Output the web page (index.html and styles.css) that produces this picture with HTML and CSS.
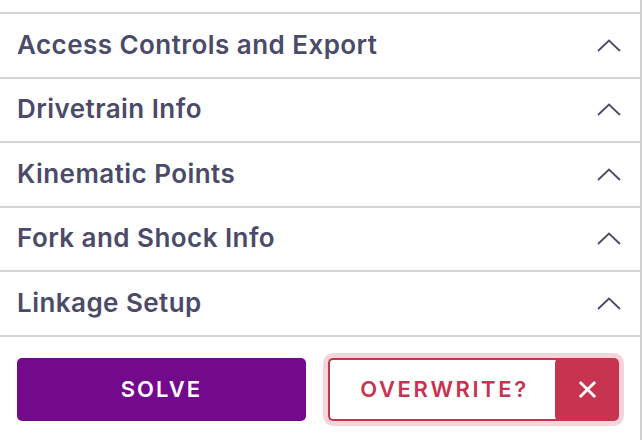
FILE: index.html
```html
<!DOCTYPE html>
<html>
<head>
<meta charset="utf-8">
<link rel="stylesheet" href="styles.css">
</head>
<body>
<div class="panel">
  <div class="row"><span class="title">Access Controls and Export</span><svg class="chev" viewBox="0 0 24 13"><path d="M1 12 L12 1.5 L23 12" /></svg></div>
  <div class="row"><span class="title">Drivetrain Info</span><svg class="chev" viewBox="0 0 24 13"><path d="M1 12 L12 1.5 L23 12" /></svg></div>
  <div class="row"><span class="title">Kinematic Points</span><svg class="chev" viewBox="0 0 24 13"><path d="M1 12 L12 1.5 L23 12" /></svg></div>
  <div class="row"><span class="title">Fork and Shock Info</span><svg class="chev" viewBox="0 0 24 13"><path d="M1 12 L12 1.5 L23 12" /></svg></div>
  <div class="row row-last"><span class="title">Linkage Setup</span><svg class="chev" viewBox="0 0 24 13"><path d="M1 12 L12 1.5 L23 12" /></svg></div>
  <div class="actions">
    <button class="solve">SOLVE</button>
    <div class="overwrite">
      <button class="ow-label">OVERWRITE?</button>
      <button class="ow-x"><svg viewBox="0 0 20 20"><path d="M2 2 L18 18 M18 2 L2 18" /></svg></button>
    </div>
  </div>
</div>
</body>
</html>
```
FILE: styles.css
```css
html, body {
  margin: 0;
  padding: 0;
  background: #ffffff;
}
body {
  font-family: Inter, "Noto Sans", sans-serif;
  overflow: hidden;
}
.panel {
  width: 640px;
  height: 440px;
  border-right: 2px solid #d4d4d4;
  padding-top: 12px;
  box-sizing: content-box;
}
.row {
  height: 62.5px;
  border-top: 2px solid #d4d4d4;
  display: flex;
  align-items: center;
  justify-content: space-between;
  padding: 0 19px 0 17px;
}
.row-last {
  border-bottom: 2px solid #d4d4d4;
}
.title {
  font-size: 26px;
  font-weight: 600;
  color: #4b4b69;
  letter-spacing: 0.45px;
  margin-top: -2px;
}
.chev {
  width: 24px;
  height: 13px;
  fill: none;
  stroke: #4b4b69;
  stroke-width: 1.8;
}
.actions {
  display: flex;
  padding: 21px 20px 0 17px;
  gap: 22px;
}
button {
  font-family: Inter, "Noto Sans", sans-serif;
  border: none;
  cursor: pointer;
}
.solve {
  width: 289px;
  height: 63px;
  background: #730a8c;
  color: #ffffff;
  border-radius: 5px;
  font-size: 22px;
  font-weight: 600;
  letter-spacing: 2px;
  padding: 0;
}
.overwrite {
  width: 291px;
  height: 63px;
  display: flex;
  border-radius: 5px;
  box-shadow: 0 0 0 5px #f5d4da;
}
.ow-label {
  flex: 1;
  background: #ffffff;
  border: 2px solid #c8334f;
  border-right: none;
  border-radius: 5px 0 0 5px;
  color: #c8334f;
  font-size: 22px;
  font-weight: 600;
  letter-spacing: 2.6px;
  padding: 0;
}
.ow-x {
  width: 64px;
  background: #c8334f;
  border-radius: 5px;
  margin-left: -4px;
  display: flex;
  align-items: center;
  justify-content: center;
}
.ow-x svg {
  width: 19px;
  height: 19px;
  fill: none;
  stroke: #ffffff;
  stroke-width: 3;
}
```
